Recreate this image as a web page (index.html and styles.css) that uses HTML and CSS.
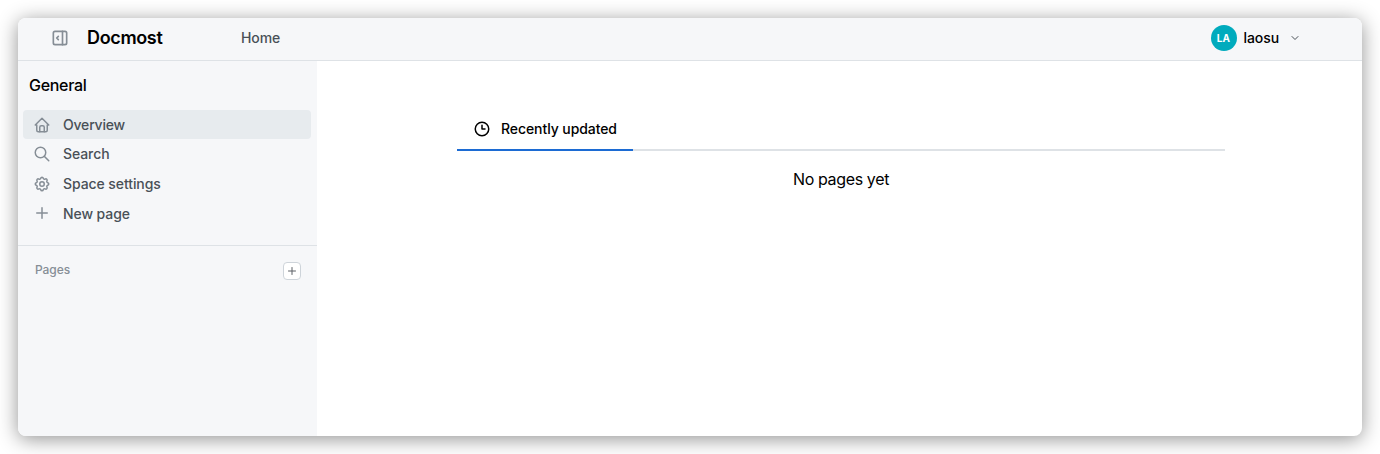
FILE: index.html
```html
<!DOCTYPE html>
<html lang="en">
<head>
<meta charset="utf-8">
<title>Docmost</title>
<link rel="stylesheet" href="styles.css">
</head>
<body>
<div class="window">
  <header class="header">
    <svg class="icon toggle" viewBox="0 0 24 24"><rect x="4" y="4" width="16" height="16" rx="2"/><path d="M15 4v16M10 10l-2 2 2 2"/></svg>
    <span class="brand">Docmost</span>
    <a class="home">Home</a>
    <div class="user">
      <span class="avatar">LA</span>
      <span class="username">laosu</span>
      <svg class="icon chevron" viewBox="0 0 24 24"><path d="M6 9l6 6 6-6"/></svg>
    </div>
  </header>
  <div class="body">
    <aside class="sidebar">
      <h2 class="space">General</h2>
      <nav class="menu">
        <a class="item active"><svg class="icon" viewBox="0 0 24 24"><path d="M5 12H3l9-9 9 9h-2M5 12v7a2 2 0 0 0 2 2h10a2 2 0 0 0 2-2v-7"/><path d="M9 21v-6a2 2 0 0 1 2-2h2a2 2 0 0 1 2 2v6"/></svg><span class="overview">Overview</span></a>
        <a class="item"><svg class="icon" viewBox="0 0 24 24"><circle cx="10" cy="10" r="7"/><path d="M21 21l-6-6"/></svg><span>Search</span></a>
        <a class="item"><svg class="icon" viewBox="0 0 24 24"><path d="M10.325 4.317c.426-1.756 2.924-1.756 3.35 0a1.724 1.724 0 0 0 2.573 1.066c1.543-.94 3.31.826 2.37 2.37a1.724 1.724 0 0 0 1.065 2.572c1.756.426 1.756 2.924 0 3.35a1.724 1.724 0 0 0-1.066 2.573c.94 1.543-.826 3.31-2.37 2.37a1.724 1.724 0 0 0-2.572 1.065c-.426 1.756-2.924 1.756-3.35 0a1.724 1.724 0 0 0-2.573-1.066c-1.543.94-3.31-.826-2.37-2.37a1.724 1.724 0 0 0-1.065-2.572c-1.756-.426-1.756-2.924 0-3.35a1.724 1.724 0 0 0 1.066-2.573c-.94-1.543.826-3.31 2.37-2.37 1 .608 2.296.07 2.572-1.065z"/><circle cx="12" cy="12" r="3"/></svg><span>Space settings</span></a>
        <a class="item"><svg class="icon" viewBox="0 0 24 24"><path d="M12 5v14M5 12h14"/></svg><span>New page</span></a>
      </nav>
      <div class="pages">
        <span class="pages-label">Pages</span>
        <button class="add" aria-label="Create page"><svg class="icon plus" viewBox="0 0 24 24"><path d="M12 5v14M5 12h14"/></svg></button>
      </div>
    </aside>
    <main class="main">
      <div class="tabs">
        <div class="tab"><svg class="icon clock" viewBox="0 0 24 24"><circle cx="12" cy="12" r="9"/><path d="M12 7v5h4"/></svg><span>Recently updated</span></div>
      </div>
      <p class="empty">No pages yet</p>
    </main>
  </div>
</div>
</body>
</html>
```
FILE: styles.css
```css
* { box-sizing: border-box; }

body {
  margin: 0;
  padding: 18px;
  height: 454px;
  overflow: hidden;
  background: #fff;
  color: #000;
  font-family: Inter, "Liberation Sans", sans-serif;
  font-size: 14px;
  font-weight: 500;
  letter-spacing: -.08px;
}

.window {
  height: 418px;
  border-radius: 8px;
  overflow: hidden;
  background: #fff;
  box-shadow: 0 3px 20px rgba(0, 0, 0, .43);
  display: flex;
  flex-direction: column;
}

.icon {
  width: 18px;
  height: 18px;
  flex: none;
  fill: none;
  stroke: #868e96;
  stroke-width: 2;
  stroke-linecap: round;
  stroke-linejoin: round;
}

.header {
  height: 43px;
  flex: none;
  display: flex;
  align-items: center;
  padding: 0 61px 2px 32px;
  background: #f6f7f9;
  border-bottom: 1px solid #dee2e6;
}

.toggle { width: 20px; height: 20px; }

.brand {
  width: 154px;
  margin-left: 17px;
  padding-bottom: 2px;
  font-size: 18px;
  font-weight: 600;
  letter-spacing: -.35px;
}

.home { padding-bottom: 1px; color: #495057; }

.user {
  margin-left: auto;
  display: flex;
  align-items: center;
}

.avatar {
  width: 26px;
  height: 26px;
  border-radius: 50%;
  background: #00abbd;
  color: #fff;
  font-size: 10px;
  font-weight: 700;
  letter-spacing: .1px;
  display: flex;
  align-items: center;
  justify-content: center;
}

.username { margin: 0 10px 0 7px; padding-bottom: 1px; }

.chevron { width: 12px; height: 12px; stroke: #495057; }

.body { flex: 1; display: flex; }

.sidebar {
  width: 299px;
  background: #f6f7f9;
}

.space {
  margin: 0;
  padding: 13px 11px 0;
  height: 49px;
  font-size: 16px;
  font-weight: 500;
  line-height: 22px;
  letter-spacing: -.3px;
}

.menu {
  height: 136px;
  padding: 0 6px 0 5px;
  border-bottom: 1px solid #dee2e6;
}

.item {
  height: 29.8px;
  padding-left: 10px;
  display: flex;
  align-items: center;
  gap: 12px;
  border-radius: 4px;
  color: #495057;
}

.item.active { height: 29px; background: #e7ebee; }

.overview { letter-spacing: -.2px; }

.pages {
  padding: 16px 16px 0 17px;
  display: flex;
  justify-content: space-between;
}

.pages-label {
  color: #868e96;
  font-size: 12px;
  line-height: 16px;
}

.add {
  width: 18px;
  height: 18px;
  padding: 0;
  border: 1px solid #ced4da;
  border-radius: 4px;
  background: #fff;
  display: flex;
  align-items: center;
  justify-content: center;
}

.plus { width: 12px; height: 12px; stroke: #5c6166; }

.main {
  flex: 1;
  padding: 46px 137px 0 140px;
}

.tabs {
  height: 44px;
  display: flex;
  border-bottom: 2px solid #dee2e6;
}

.tab {
  width: 176px;
  height: 44px;
  padding: 1px 0 0 16px;
  display: flex;
  align-items: center;
  gap: 10px;
  border-bottom: 2px solid #1c6bd3;
}

.clock { stroke: #000; }

.empty {
  margin: 17px 0 0;
  text-align: center;
  font-size: 16px;
  font-weight: 400;
  line-height: 22px;
  letter-spacing: -.36px;
}
```
